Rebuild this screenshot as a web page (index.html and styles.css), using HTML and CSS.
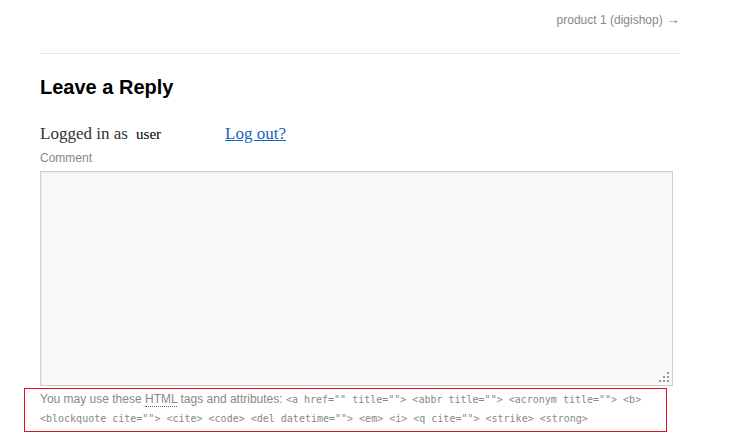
FILE: index.html
```html
<!DOCTYPE html>
<html>
<head>
<meta charset="utf-8">
<link rel="stylesheet" href="styles.css">
</head>
<body>
<div class="page">
  <nav class="post-nav"><a href="#">product 1 (digishop) <span class="arrow">→</span></a></nav>
  <section class="respond">
    <h3 class="reply-title">Leave a Reply</h3>
    <p class="logged-in">Logged in as <span class="user">user</span><a class="logout" href="#">Log out?</a></p>
    <label class="comment-label">Comment</label>
    <div class="textarea-wrap">
      <textarea class="comment-box"></textarea>
      <span class="grip"></span>
    </div>
    <p class="allowed">You may use these <abbr title="HyperText Markup Language">HTML</abbr> tags and attributes: <code>&lt;a href="" title=""&gt; &lt;abbr title=""&gt; &lt;acronym title=""&gt; &lt;b&gt; &lt;blockquote cite=""&gt; &lt;cite&gt; &lt;code&gt; &lt;del datetime=""&gt; &lt;em&gt; &lt;i&gt; &lt;q cite=""&gt; &lt;strike&gt; &lt;strong&gt;</code></p>
  </section>
</div>
</body>
</html>
```
FILE: styles.css
```css
html, body {
  margin: 0;
  padding: 0;
  background: #fff;
}
body {
  font-family: "Liberation Sans", Arial, sans-serif;
}
.page {
  width: 640px;
  margin-left: 40px;
}
.post-nav {
  text-align: right;
  font-size: 12px;
  line-height: 16px;
  padding-top: 11px;
  height: 42px;
  border-bottom: 1px solid #e6e6e6;
  box-sizing: content-box;
}
.post-nav a {
  color: #888;
  text-decoration: none;
}
.post-nav .arrow {
  font-size: 14px;
  line-height: 16px;
}
.reply-title {
  margin: 0;
  padding-top: 21px;
  font-size: 20px;
  line-height: 24px;
  font-weight: bold;
  color: #000;
}
.logged-in {
  margin: 25px 0 0 0;
  font-family: "Liberation Serif", "Times New Roman", serif;
  font-size: 17px;
  line-height: 20px;
  color: #333;
}
.user {
  font-size: 15px;
  color: #000;
  margin-left: 4px;
}
.logout {
  color: #1565c0;
  text-decoration: underline;
  margin-left: 64px;
}
.comment-label {
  display: block;
  margin-top: 6px;
  font-size: 12px;
  line-height: 16px;
  color: #888;
}
.textarea-wrap {
  position: relative;
  margin-top: 5px;
  width: 633px;
  height: 215px;
}
.comment-box {
  display: block;
  width: 633px;
  height: 215px;
  box-sizing: border-box;
  margin: 0;
  border: 1px solid #cfcfcf;
  background: #f8f8f8;
  resize: none;
  box-shadow: inset 1px 1px 2px rgba(0,0,0,0.05);
}
.grip {
  position: absolute;
  right: 4px;
  bottom: 4px;
  width: 10px;
  height: 10px;
  background:
    linear-gradient(#999, #999) 8px 0 / 2px 2px no-repeat,
    linear-gradient(#999, #999) 4px 4px / 2px 2px no-repeat,
    linear-gradient(#999, #999) 8px 4px / 2px 2px no-repeat,
    linear-gradient(#999, #999) 0 8px / 2px 2px no-repeat,
    linear-gradient(#999, #999) 4px 8px / 2px 2px no-repeat,
    linear-gradient(#999, #999) 8px 8px / 2px 2px no-repeat;
}
.allowed {
  margin: 2px 0 0 -16px;
  width: 643px;
  box-sizing: border-box;
  border: 1px solid #e0101a;
  padding: 1px 8px 3px 15px;
  font-size: 12px;
  line-height: 19px;
  color: #888;
}
.allowed abbr {
  text-decoration: none;
  border-bottom: 1px dotted #666;
}
.allowed code {
  font-family: "DejaVu Sans Mono", "Liberation Mono", monospace;
  font-size: 10px;
  color: #888;
}
```
